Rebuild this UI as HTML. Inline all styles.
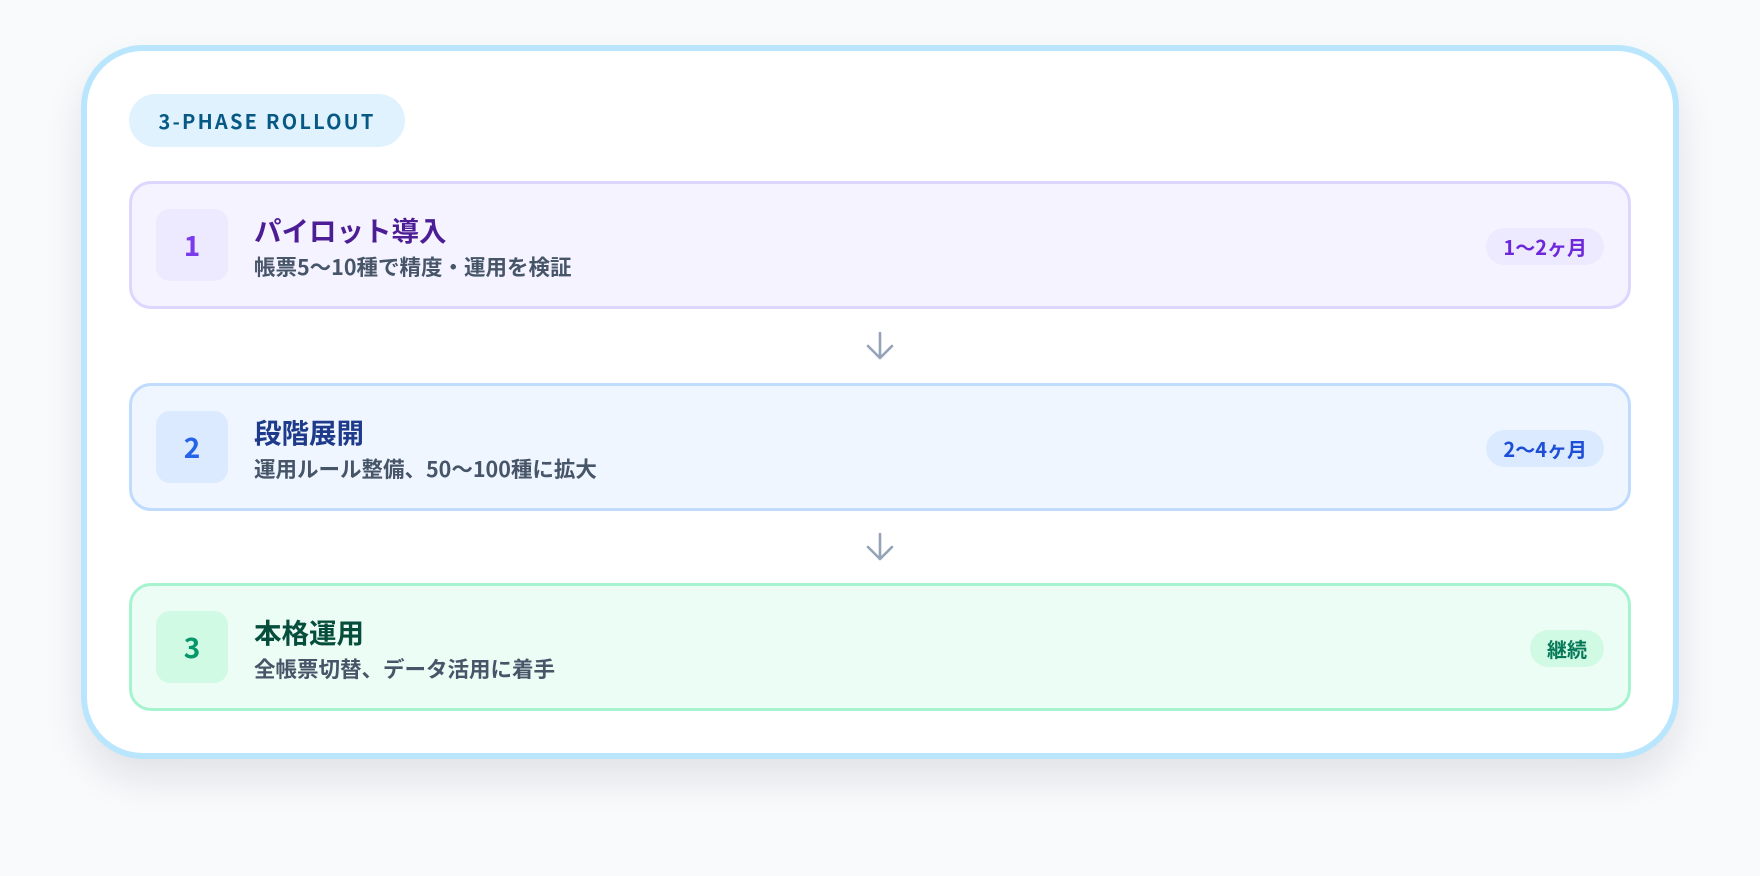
<!DOCTYPE html>
<html><head><meta charset="utf-8"><style>
*{margin:0;padding:0;box-sizing:border-box}
body{width:1760px;height:876px;background:#f8fafc;font-family:"Liberation Sans","Noto Sans CJK JP",sans-serif;position:relative;overflow:hidden}
.card{position:absolute;left:81px;top:45px;width:1598px;height:714px;background:#fff;border:6px solid #bae6fd;border-radius:62px;box-shadow:0 20px 40px rgba(15,23,42,0.10)}
.badge{position:absolute;left:129px;top:94px;width:276px;height:53px;border-radius:27px;background:#e0f2fe;color:#075985;font-weight:700;font-size:20px;letter-spacing:2.2px;display:flex;align-items:center;justify-content:center;font-family:"Noto Sans CJK JP","Liberation Sans",sans-serif}
.ph{position:absolute;left:129px;width:1502px;height:128px;border:3px solid;border-radius:22px}
.num{position:absolute;left:24px;top:25px;width:72px;height:72px;border-radius:14px;display:flex;align-items:center;justify-content:center;font-weight:700;font-size:28px;font-family:"Noto Sans CJK JP",sans-serif}
.t{position:absolute;left:122px;top:27px;font-size:27.5px;font-weight:700;font-family:"Noto Sans CJK JP",sans-serif;line-height:36px}
.s{position:absolute;left:122px;top:68px;font-size:21.5px;font-weight:700;color:#475569;font-family:"Noto Sans CJK JP",sans-serif;line-height:30px}
.tag{position:absolute;right:24px;top:44px;height:37px;padding:0 17px;border-radius:19px;font-size:20px;font-weight:700;display:flex;align-items:center;font-family:"Noto Sans CJK JP",sans-serif}
.arr{position:absolute;left:866px}
</style></head><body>
<div class="card"></div>
<div class="badge">3-PHASE ROLLOUT</div>
<div class="ph" style="top:181px;background:#f5f3ff;border-color:#ddd6fe">
<div class="num" style="background:#ede9fe;color:#7c3aed">1</div>
<div class="t" style="color:#4c1d95">パイロット導入</div>
<div class="s">帳票5〜10種で精度・運用を検証</div>
<div class="tag" style="background:#ede9fe;color:#6d28d9">1〜2ヶ月</div>
</div>
<svg class="arr" style="top:331px" width="28" height="30" viewBox="0 0 28 30"><path d="M14 2V27M2 15L14 27L26 15" fill="none" stroke="#94a3b8" stroke-width="2.6" stroke-linecap="round" stroke-linejoin="round"/></svg>
<div class="ph" style="top:383px;background:#eff6ff;border-color:#bfdbfe">
<div class="num" style="background:#dbeafe;color:#2563eb">2</div>
<div class="t" style="color:#1e3a8a">段階展開</div>
<div class="s">運用ルール整備、50〜100種に拡大</div>
<div class="tag" style="background:#dbeafe;color:#1d4ed8">2〜4ヶ月</div>
</div>
<svg class="arr" style="top:532px" width="28" height="30" viewBox="0 0 28 30"><path d="M14 2V27M2 15L14 27L26 15" fill="none" stroke="#94a3b8" stroke-width="2.6" stroke-linecap="round" stroke-linejoin="round"/></svg>
<div class="ph" style="top:583px;background:#ecfdf5;border-color:#a7f3d0">
<div class="num" style="background:#d1fae5;color:#059669">3</div>
<div class="t" style="color:#064e3b">本格運用</div>
<div class="s">全帳票切替、データ活用に着手</div>
<div class="tag" style="background:#d1fae5;color:#047857">継続</div>
</div>
</body></html>
